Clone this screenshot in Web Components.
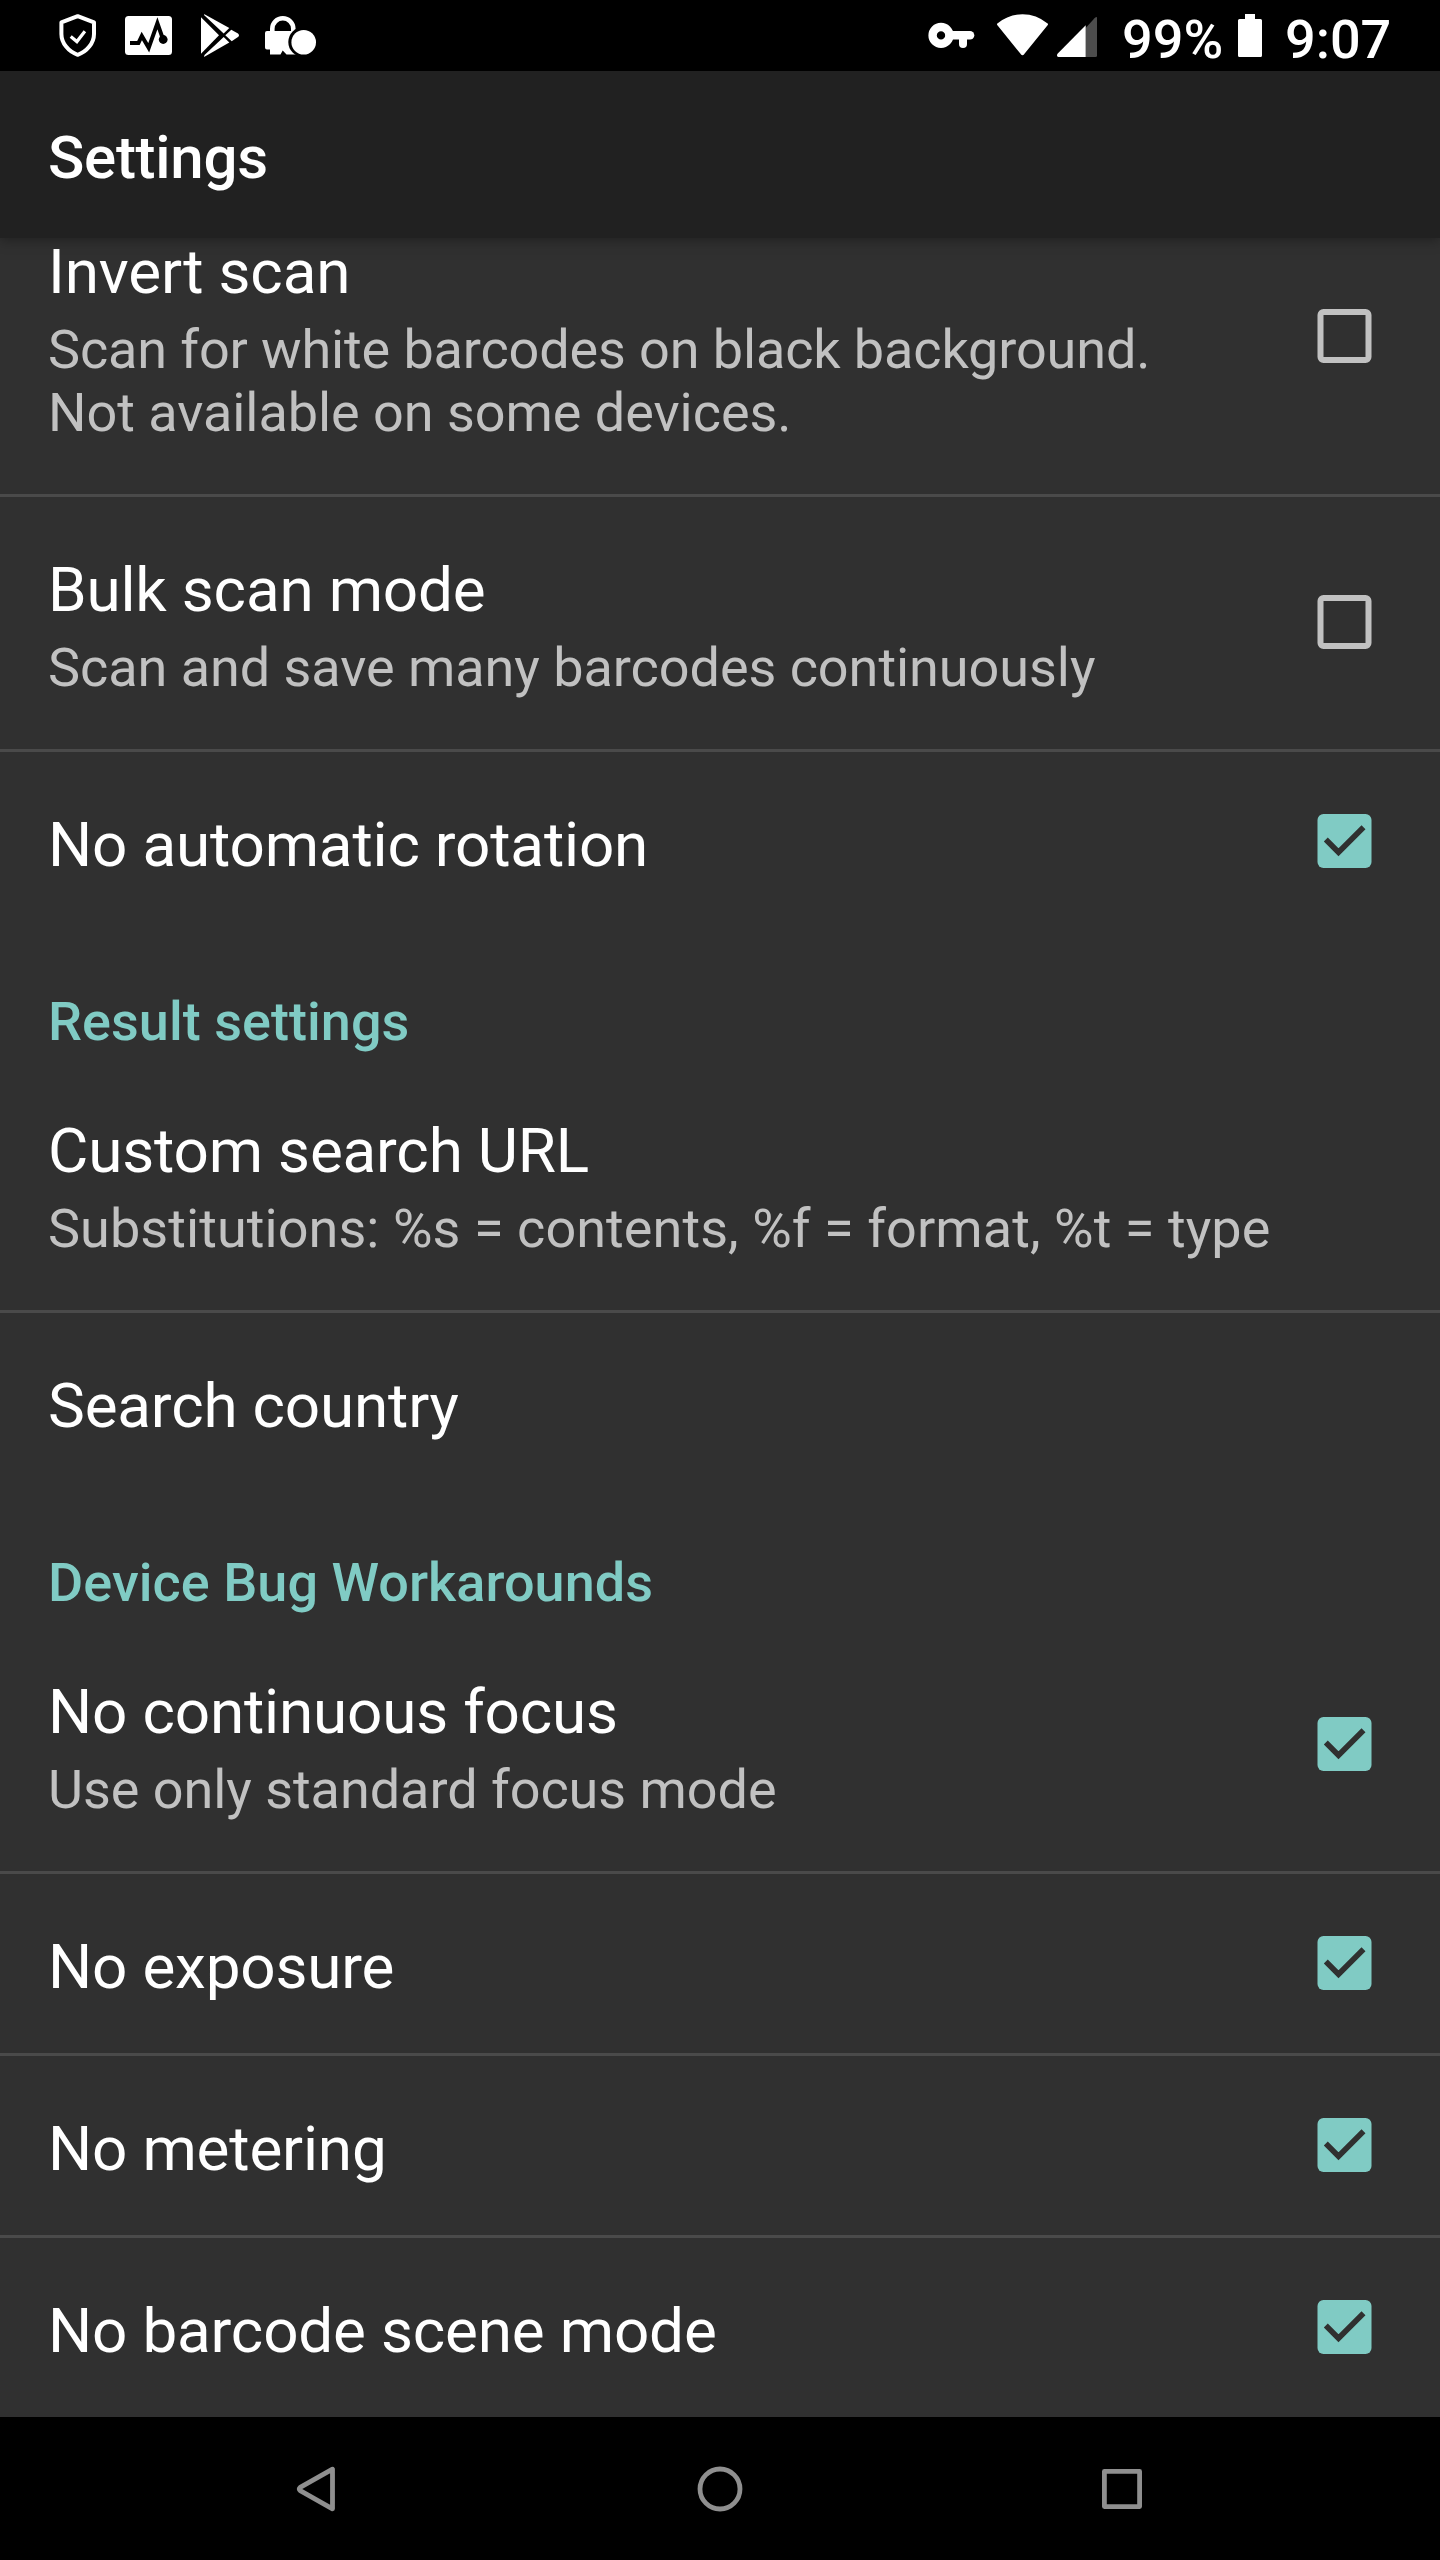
<!DOCTYPE html>
<html lang="en">
<head>
<meta charset="utf-8">
<title>Settings</title>
<style>
html,body{margin:0;padding:0;background:#000}
body{font-family:Roboto,"Noto Sans",sans-serif;color:#fff}
</style>
</head>
<body>
<settings-screen></settings-screen>

<template id="t-screen">
<style>
:host{display:flex;flex-direction:column;width:1440px;height:2560px;overflow:hidden;background:#303030}
main{flex:1;min-height:0;display:flex;flex-direction:column;justify-content:flex-end}
</style>
<status-bar></status-bar>
<app-bar>Settings</app-bar>
<main>
<pref-row divider control="off">Invert scan<span slot="summary"><span style="letter-spacing:-.13px">Scan for white barcodes on black background.</span><br><span style="letter-spacing:-.04px">Not available on some devices.</span></span></pref-row>
<pref-row divider control="off">Bulk scan mode<span slot="summary">Scan and save many barcodes continuously</span></pref-row>
<pref-row control="on">No automatic rotation</pref-row>
<pref-category>Result settings</pref-category>
<pref-row divider>Custom search URL<span slot="summary" style="letter-spacing:.06px">Substitutions: %s = contents, %f = format, %t = type</span></pref-row>
<pref-row>Search country</pref-row>
<pref-category>Device Bug Workarounds</pref-category>
<pref-row divider control="on">No continuous focus<span slot="summary">Use only standard focus mode</span></pref-row>
<pref-row divider control="on">No exposure</pref-row>
<pref-row divider control="on">No metering</pref-row>
<pref-row control="on">No barcode scene mode</pref-row>
</main>
<nav-bar></nav-bar>
</template>

<template id="t-status">
<style>
:host{display:flex;flex:none;height:71px;background:#000;justify-content:space-between;font-size:54px;font-weight:500;line-height:63px;position:relative;z-index:2}
svg{display:block;flex:none;overflow:visible}
.left{display:flex;padding-left:42px}
.right{display:flex;padding-right:45px}
.pct{width:118px;padding-top:8px;box-sizing:border-box;white-space:nowrap;text-indent:-1px}
.time{width:110px;padding-top:8px;box-sizing:border-box;white-space:nowrap}
</style>
<div class="left">
<svg width="71" height="71" fill="none" stroke="#fff"><path stroke-width="4" stroke-linejoin="round" d="M35.7 16.2 52 22.4V34c0 9-7 17.700-16.300 20.800C26.400 51.700 19.400 43 19.400 34V22.400Z"/><path stroke-width="3.200" d="m28.700 36.500 6.200 5.100 8-10.300"/></svg>
<svg width="71" height="71"><rect x="12" y="16" width="47" height="39" rx="3.500" fill="#fff"/><path fill="none" stroke="#000" stroke-width="4" d="M17 43h8.400l3.400-7 6.900 11.800 8.700-24.500 5.700 16"/><circle cx="50.200" cy="39.500" r="4.400"/></svg>
<svg width="71" height="71" fill="#fff"><path d="M17 17.300 35 35.300 17 53.700Z"/><path d="M20 14 45.300 28 39.700 33.600 20.500 15.500Z"/><path d="M20 57 45.300 42.500 39.700 37 20.500 55Z"/><path d="M41.300 35.300 47.300 29.700 54 33.500Q56 35.300 54 37L47.700 41.200Z"/></svg>
<svg width="71" height="71"><path fill="none" stroke="#fff" stroke-width="4.600" d="M17.300 33v-4.200a10.500 10.500 0 0 1 21 0V33"/><path fill="#fff" d="M12 31H44V54.500H31.500L27.700 50.500 25.500 54.500H15V49.500H12Q10 49.500 10 47.500V33Q10 31 12 31Z"/><circle cx="48.300" cy="42" r="15" fill="#000"/><circle cx="48.700" cy="42.300" r="12.300" fill="#fff"/></svg>
</div>
<div class="right">
<svg width="67" height="71" fill="none" stroke="#fff" stroke-linecap="round"><circle cx="13" cy="35.400" r="8.400" stroke-width="8.400"/><path stroke-width="8.600" d="M22 35.300H42"/><path stroke-width="8" d="M35 36v8"/></svg>
<svg width="61" height="71"><path fill="#fff" stroke="#fff" stroke-width="2" stroke-linejoin="round" d="M3 24.300Q14 15.300 27.500 15.300T52 24.300L28.300 53.700Q27.500 54.500 26.700 53.700Z"/></svg>
<svg width="67" height="71" viewBox="12 0 67 71"><path fill="#4d4d4d" d="M41.700 28 50.500 18.300Q53 16 53 18V55.500Q53 57 51.500 57H41.700Z"/><path fill="#fff" d="M41.700 25.300V57H14.500Q12.300 56.500 13.300 54Z"/></svg>
<div class="pct">99%</div>
<svg width="44" height="71"><path fill="#fff" d="M4 14h10v5h5.500Q21 19 21 20.500V55.500Q21 57 19.500 57H-1.500Q-3 57-3 55.500V20.500Q-3 19-1.500 19H4Z"/></svg>
<div class="time">9:07</div>
</div>
</template>

<template id="t-app">
<style>
:host{display:flex;flex:none;align-items:center;height:167px;box-sizing:border-box;padding:6px 48px 0;background:#212121;font-size:60px;font-weight:500;line-height:71px;letter-spacing:-.28px;position:relative;z-index:1;box-shadow:0 2px 12px rgba(0,0,0,.35)}
</style>
<slot></slot>
</template>

<template id="t-row">
<style>
:host{display:flex;flex:none;align-items:center;padding:0 48px}
:host([divider]){border-bottom:3px solid #4a4a4a}
.text{flex:1;min-width:0;padding:51px 0 45px;white-space:nowrap}
.title{font-size:62px;line-height:83px;letter-spacing:-.18px}
.summary{display:none;margin-top:5px;font-size:54px;line-height:63px;letter-spacing:-.05px;color:#c1c1c1}
:host([has-summary]) .text{padding-bottom:50px}
:host([has-summary]) .summary{display:block}
:host([has-summary]) check-box{margin-bottom:2px}
</style>
<div class="text"><div class="title"><slot></slot></div><div class="summary"><slot name="summary"></slot></div></div>
<check-box></check-box>
</template>

<template id="t-check">
<style>
:host{display:none;flex:none;width:96px;height:96px;margin-bottom:1px}
:host([state]){display:block}
svg{display:block}
.on,.off{display:none}
:host([state=on]) .on,:host([state=off]) .off{display:block}
</style>
<svg width="96" height="96">
<rect class="off" x="24.500" y="24" width="48" height="48" rx="3" fill="none" stroke="#c1c1c1" stroke-width="6"/>
<g class="on"><rect x="21.500" y="21" width="54" height="54" rx="6" fill="#80cbc4"/><path d="M29.800 46.500 42.500 59.200 67.500 34.200" fill="none" stroke="#303030" stroke-width="5.600"/></g>
</svg>
</template>

<template id="t-cat">
<style>
:host{display:block;flex:none;height:127px;box-sizing:border-box;padding:59px 48px 0;font-size:54px;line-height:63px;letter-spacing:.04px;font-weight:500;color:#80cbc4;white-space:nowrap}
</style>
<slot></slot>
</template>

<template id="t-nav">
<style>
:host{display:flex;flex:none;height:143px;background:#000;align-items:center;justify-content:center;position:relative;z-index:2}
div{width:402px;display:flex;justify-content:center}
svg{display:block;fill:none;stroke:#8f8f8f;stroke-width:4.800;stroke-linejoin:round}
</style>
<div><svg width="60" height="60"><path d="M44.500 10.200V49.800L12.200 31.600Q10.200 30 12.200 28.400Z"/></svg></div>
<div><svg width="60" height="60"><circle cx="30" cy="30" r="20"/></svg></div>
<div><svg width="60" height="60"><rect x="12.400" y="12.400" width="35.200" height="35.200"/></svg></div>
</template>

<script>
const define = (name, templateId, connect) => customElements.define(name, class extends HTMLElement {
  constructor() {
    super();
    this.attachShadow({ mode: 'open' }).append(document.getElementById(templateId).content.cloneNode(true));
  }
  connectedCallback() { if (connect) connect(this); }
});
define('status-bar', 't-status');
define('app-bar', 't-app');
define('check-box', 't-check');
define('pref-category', 't-cat');
define('nav-bar', 't-nav');
define('pref-row', 't-row', el => {
  if (el.querySelector('[slot=summary]')) el.setAttribute('has-summary', '');
  if (el.hasAttribute('control')) el.shadowRoot.querySelector('check-box').setAttribute('state', el.getAttribute('control'));
});
define('settings-screen', 't-screen');
</script>
</body>
</html>
